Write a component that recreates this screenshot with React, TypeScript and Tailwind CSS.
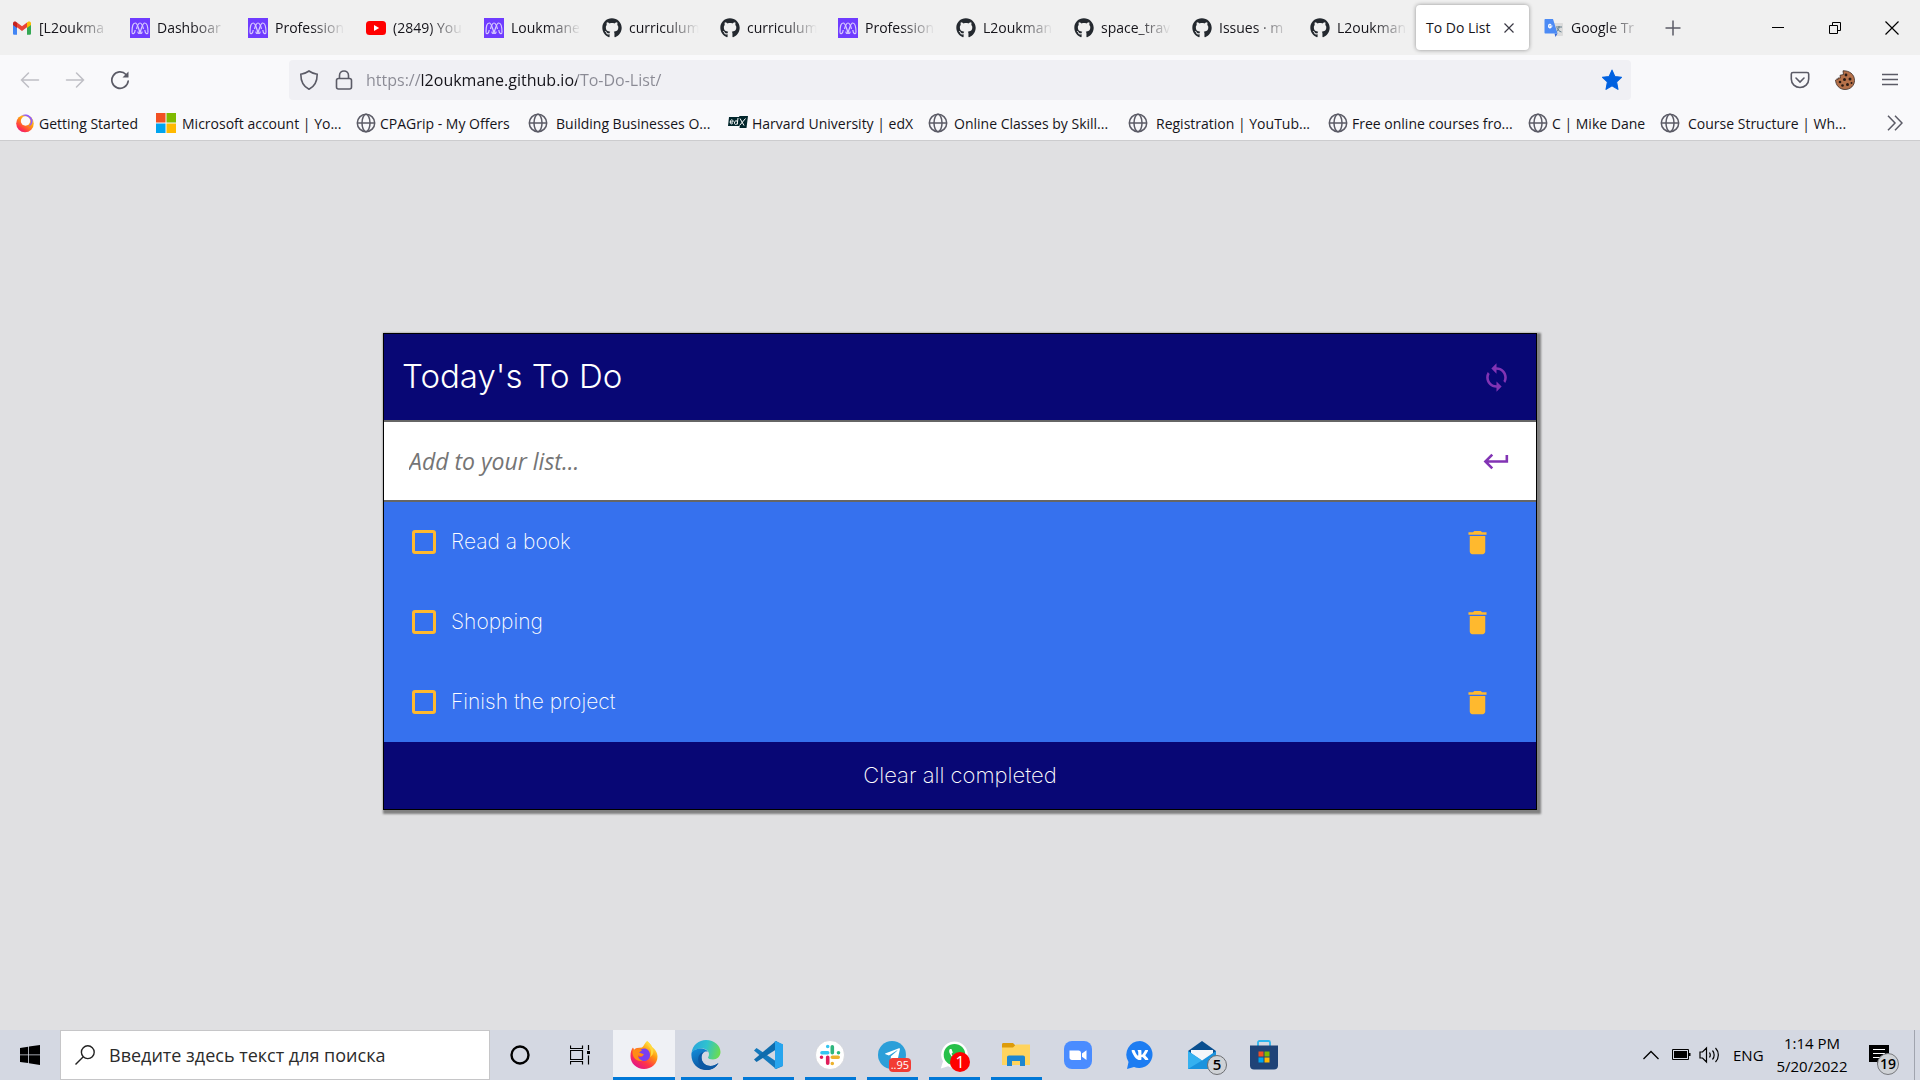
import { useState } from "react";
import type { ReactNode } from "react";
import { FaGithub, FaVk, FaTelegramPlane } from "react-icons/fa";
import { MdDelete, MdKeyboardReturn, MdSync } from "react-icons/md";

/* ---------- Favicons ---------- */

function GmailIcon() {
  return (
    <svg viewBox="0 0 20 20" className="size-5">
      <path d="M1 5v10.500c0 .8.6 1.300 1.300 1.300H5V8.300L1 5.200z" fill="#4285f4" />
      <path d="M19 5v10.500c0 .8-.6 1.300-1.300 1.300H15V8.300l4-3.100z" fill="#34a853" />
      <path d="M5 4.500v4.800l5 3.800 5-3.800V4.500l-5 3.800z" fill="#ea4335" />
      <path d="M1 5.200V7l4 3V4.500l-.8-.6C2.900 3 1 3.800 1 5.200z" fill="#c5221f" />
      <path d="M19 5.200V7l-4 3V4.500l.8-.6c1.300-.9 3.200-.1 3.200 1.300z" fill="#fbbc04" />
    </svg>
  );
}

function MicroverseIcon() {
  return (
    <svg viewBox="0 0 20 20" className="size-5">
      <rect width="20" height="20" fill="#6f3cff" />
      <g fill="none" stroke="#d9ccff" strokeWidth="1.200">
        <path d="M2 14.500C2 8 3 5 5.200 5s2.600 3.500 4.800 9.500c1 1.800 2.200.8 2-1" />
        <path d="M6.500 11C7.500 7 8.300 5 10 5s2.500 2 3.500 6" />
        <path d="M8 13.500c-.2 1.800 1 2.800 2 1C12.200 8.500 12.600 5 14.800 5S18 8 18 14.500" />
        <path d="M2 14.500c.5 2 2.800 1.500 3.200-2.500M18 14.500c-.5 2-2.800 1.500-3.200-2.500" />
      </g>
    </svg>
  );
}

function YoutubeIcon() {
  return (
    <svg viewBox="0 0 20 20" className="size-5">
      <rect y="3" width="20" height="14" rx="3.500" fill="#f00" />
      <path d="M8 7l5.200 3L8 13z" fill="#fff" />
    </svg>
  );
}

function GithubIcon() {
  return <FaGithub className="size-5 text-[#24292f]" />;
}

function TranslateIcon() {
  return (
    <svg viewBox="0 0 20 20" className="size-5">
      <path d="M9 5h9c.6 0 1 .4 1 1v11c0 .6-.4 1-1 1h-6z" fill="#dcdcdc" />
      <path d="M12 9h6M15 8v1c0 2-1 4-3 5M13 10c.8 2 2.500 3.500 4.500 4" stroke="#607d8b" fill="none" />
      <path d="M10.500 15.500h3L11.500 19z" fill="#3367d6" />
      <path d="M1.500 1H9l4.500 14.500h-12c-.6 0-1-.4-1-1V2c0-.6.4-1 1-1z" fill="#4c8bf5" />
      <path d="M8.500 8H6v1.200h1.200c-.3 1-2.700 1.300-2.700-1s2-2.200 2.600-1.300" stroke="#fff" strokeWidth="1.100" fill="none" />
    </svg>
  );
}

function GlobeIcon() {
  return (
    <svg viewBox="0 0 20 20" className="size-5" fill="none" stroke="#5b5b66" strokeWidth="1.500">
      <circle cx="10" cy="10" r="8.700" />
      <ellipse cx="10" cy="10" rx="4" ry="8.700" />
      <path d="M1.500 10h17" />
    </svg>
  );
}

function FirefoxRing() {
  return (
    <svg viewBox="0 0 20 20" className="size-5">
      <defs>
        <linearGradient id="ring" x1="0.900" y1="0" x2="0.200" y2="1">
          <stop offset="0" stopColor="#fff44f" />
          <stop offset="0.450" stopColor="#ff980e" />
          <stop offset="0.800" stopColor="#ff3647" />
          <stop offset="1" stopColor="#e31587" />
        </linearGradient>
      </defs>
      <circle cx="10" cy="10.500" r="8.800" fill="url(#ring)" />
      <circle cx="10.500" cy="8" r="4.700" fill="#f9f9fb" />
      <path d="M6.500 2.500c4-2.500 9.500-.5 11 4.300.5 3-1 6-4 6.600 2.500-2.400 3-5.400 1.500-7.700-2-2.700-5-3.500-8.500-3.200z" fill="#9059ff" />
    </svg>
  );
}

function MicrosoftIcon() {
  return (
    <svg viewBox="0 0 20 20" className="size-5">
      <rect width="9.500" height="9.500" fill="#f25022" />
      <rect x="10.500" width="9.500" height="9.500" fill="#7fba00" />
      <rect y="10.500" width="9.500" height="9.500" fill="#00a4ef" />
      <rect x="10.500" y="10.500" width="9.500" height="9.500" fill="#ffb900" />
    </svg>
  );
}

function EdxIcon() {
  return (
    <svg viewBox="0 0 20 20" className="size-5">
      <path d="M1 4h10l.5-1H20l-1.500 12h-7l.3-2H0z" fill="#02262b" />
      <path d="M2 9h3c.3-3-2.500-3-2.800 0-.2 2 1.300 2.300 2.500 1.500M10 5l-.8 6.500M9.500 9c-.5-2-3-1.500-3 1 0 2 2.300 2 3 0M12 5.500l4 7M17.500 5.500l-6 7" stroke="#fff" fill="none" />
    </svg>
  );
}

/* ---------- Browser chrome ---------- */

type Tab = { title: string; icon?: ReactNode; active?: boolean };

const TABS: Tab[] = [
  { title: "[L2oukma", icon: <GmailIcon /> },
  { title: "Dashboar", icon: <MicroverseIcon /> },
  { title: "Profession", icon: <MicroverseIcon /> },
  { title: "(2849) You", icon: <YoutubeIcon /> },
  { title: "Loukmane", icon: <MicroverseIcon /> },
  { title: "curriculum", icon: <GithubIcon /> },
  { title: "curriculum", icon: <GithubIcon /> },
  { title: "Profession", icon: <MicroverseIcon /> },
  { title: "L2oukman", icon: <GithubIcon /> },
  { title: "space_trav", icon: <GithubIcon /> },
  { title: "Issues · m", icon: <GithubIcon /> },
  { title: "L2oukman", icon: <GithubIcon /> },
  { title: "To Do List", active: true },
  { title: "Google Tr", icon: <TranslateIcon /> },
];

function TabStrip() {
  return (
    <header className="flex h-[55px] items-center bg-[#f0f0f0] text-[14px] text-[#15141a]">
      <div role="tablist" className="flex min-w-0 items-center">
        {TABS.map((tab, i) =>
          tab.active ? (
            <div
              key={i}
              className="mr-[3px] flex h-[45px] w-[113px] shrink-0 items-center justify-between rounded bg-white pr-2 pl-[10px] shadow-[0_0_4px_rgba(0,0,0,0.4)]"
            >
              <button role="tab" aria-selected="true" className="whitespace-nowrap">
                {tab.title}
              </button>
              <button aria-label="Close tab" className="grid size-6 place-items-center">
                <svg viewBox="0 0 10 10" className="size-[10px]" stroke="#3a3944" strokeWidth="1.200">
                  <path d="M.5.5l9 9M9.500.5l-9 9" />
                </svg>
              </button>
            </div>
          ) : (
            <button
              key={i}
              role="tab"
              aria-selected="false"
              className="flex w-[118px] min-w-0 items-center gap-[7px] pr-1 pl-3 text-left"
            >
              <span className="shrink-0">{tab.icon}</span>
              <span className="min-w-0 flex-1 whitespace-nowrap [mask-image:linear-gradient(to_right,black_36px,transparent_70px)]">
                {tab.title}
              </span>
            </button>
          ),
        )}
      </div>
      <button aria-label="New tab" className="ml-[7px] grid size-8 place-items-center">
        <svg viewBox="0 0 16 16" className="size-4" stroke="#5b5b66" strokeWidth="1.500">
          <path d="M8 .5v15M.5 8h15" />
        </svg>
      </button>
      <div className="ml-auto flex">
        <button aria-label="Minimize" className="grid h-[54px] w-[57px] place-items-center">
          <svg viewBox="0 0 12 12" className="size-3" stroke="#000">
            <path d="M0 5.500h12" />
          </svg>
        </button>
        <button aria-label="Restore" className="grid h-[54px] w-[57px] place-items-center">
          <svg viewBox="0 0 12 12" className="size-3" stroke="#000" fill="none">
            <path d="M.5 3.500h8v8h-8zM3.500 3.500v-3h8v8h-3" />
          </svg>
        </button>
        <button aria-label="Close" className="grid h-[54px] w-[57px] place-items-center">
          <svg viewBox="0 0 14 14" className="size-[14px]" stroke="#000" strokeWidth="1.200">
            <path d="M.5.5l13 13M13.500.5l-13 13" />
          </svg>
        </button>
      </div>
    </header>
  );
}

function NavBar() {
  return (
    <nav aria-label="Navigation" className="flex h-[55px] items-center bg-[#f9f9fb] pt-[5px] pb-[10px]">
      <div className="flex w-[289px] shrink-0 pl-[7px]">
        <button aria-label="Back" className="grid h-10 w-[45px] place-items-center">
          <svg viewBox="0 0 20 20" className="size-5" fill="none" stroke="#bfbfc5" strokeWidth="1.500" strokeLinecap="round">
            <path d="M1.500 10H18.500M8.500 3l-7 7 7 7" />
          </svg>
        </button>
        <button aria-label="Forward" className="grid h-10 w-[45px] place-items-center">
          <svg viewBox="0 0 20 20" className="size-5" fill="none" stroke="#bfbfc5" strokeWidth="1.500" strokeLinecap="round">
            <path d="M1.500 10H18.500M11.500 3l7 7-7 7" />
          </svg>
        </button>
        <button aria-label="Reload" className="grid h-10 w-[45px] place-items-center">
          <svg viewBox="0 0 20 20" className="size-5" fill="none" stroke="#5b5b66" strokeWidth="1.700" strokeLinecap="round">
            <path d="M16 4.500a8.200 8.200 0 1 0 2.200 6.500" />
            <path d="M18.500 1.500v6h-6z" fill="#5b5b66" stroke="none" />
          </svg>
        </button>
      </div>
      <div className="flex h-10 min-w-0 flex-1 items-center rounded bg-[#f0f0f4] pr-2 pl-[10px]">
        <svg viewBox="0 0 20 20" className="size-5 shrink-0" fill="none" stroke="#5b5b66" strokeWidth="1.600">
          <path d="M10 1c2.500 1.800 5 2.800 8.200 3.200 0 6.800-2 12-8.200 15C3.800 16.200 1.800 11 1.800 4.200 5 3.800 7.500 2.800 10 1z" />
        </svg>
        <svg viewBox="0 0 20 20" className="ml-[15px] size-5 shrink-0" fill="none" stroke="#5b5b66" strokeWidth="1.600">
          <rect x="2.500" y="8.500" width="15" height="10.500" rx="2" />
          <path d="M5.500 8.500v-3c0-6 9-6 9 0v3" />
        </svg>
        <input
          aria-label="Address"
          defaultValue="https://l2oukmane.github.io/To-Do-List/"
          className="ml-3 min-w-0 flex-1 bg-transparent bg-[linear-gradient(to_right,#8a8a94_55px,#15141a_55px,#15141a_211px,#8a8a94_211px)] bg-clip-text text-[16px] text-transparent outline-none"
        />
        <button aria-label="Edit bookmark">
          <svg viewBox="0 0 20 20" className="size-[22px]" fill="#0061e0" stroke="#0061e0" strokeLinejoin="round">
            <path d="M10 1l2.600 5.800 6 .7-4.400 4.300 1.200 6.700L10 15.300l-5.400 3.200 1.200-6.700L1.400 7.500l6-.7z" />
          </svg>
        </button>
      </div>
      <div className="flex w-[289px] shrink-0 justify-end pr-2">
        <button aria-label="Save to Pocket" className="grid h-10 w-[45px] place-items-center">
          <svg viewBox="0 0 20 20" className="size-5" fill="none" stroke="#5b5b66" strokeWidth="1.600" strokeLinecap="round">
            <path d="M3 2.500h14c1 0 1.700.6 1.700 1.600V9c0 5-4 8.500-8.700 8.500S1.300 14 1.300 9V4.100c0-1 .7-1.600 1.700-1.600z" />
            <path d="M6 8l4 4 4-4" />
          </svg>
        </button>
        <button aria-label="Cookie editor" className="grid h-10 w-[45px] place-items-center">
          <svg viewBox="0 0 20 20" className="size-5">
            <path d="M8 .8C14 .5 19.500 4 19.500 10.500c0 5-4 9-9.500 9S.6 15 .6 10l1-.8 1.300.5V8h2.600L5 5.300l3.500-.8z" fill="#b5714a" stroke="#3b2a22" strokeWidth=".8" />
            <g fill="#2a1a14">
              <circle cx="11" cy="5" r="1.400" />
              <circle cx="15" cy="9" r="1.500" />
              <circle cx="9.500" cy="9.500" r="1.500" />
              <circle cx="5" cy="12" r="1.300" />
              <circle cx="7.500" cy="15.500" r="1.300" />
              <circle cx="12.500" cy="14.500" r="1.500" />
              <circle cx="16.500" cy="13" r="1" />
            </g>
          </svg>
        </button>
        <button aria-label="Open menu" className="grid h-10 w-[45px] place-items-center">
          <svg viewBox="0 0 16 14" className="h-[14px] w-4" stroke="#5b5b66" strokeWidth="1.500">
            <path d="M0 1.500h16M0 6.500h16M0 11.500h16" />
          </svg>
        </button>
      </div>
    </nav>
  );
}

const BOOKMARKS: { label: string; icon: ReactNode; width: string }[] = [
  { label: "Getting Started", icon: <FirefoxRing />, width: "w-[141px] gap-1" },
  { label: "Microsoft account | Yo...", icon: <MicrosoftIcon />, width: "w-[200px] gap-[6px]" },
  { label: "CPAGrip - My Offers", icon: <GlobeIcon />, width: "w-[172px] gap-1" },
  { label: "Building Businesses O...", icon: <GlobeIcon />, width: "w-[200px] gap-2" },
  { label: "Harvard University | edX", icon: <EdxIcon />, width: "w-[200px] gap-1" },
  { label: "Online Classes by Skill...", icon: <GlobeIcon />, width: "w-[200px] gap-[6px]" },
  { label: "Registration | YouTub...", icon: <GlobeIcon />, width: "w-[200px] gap-2" },
  { label: "Free online courses fro...", icon: <GlobeIcon />, width: "w-[200px] gap-1" },
  { label: "C | Mike Dane", icon: <GlobeIcon />, width: "w-[132px] gap-1" },
  { label: "Course Structure | Wh...", icon: <GlobeIcon />, width: "w-[200px] gap-2" },
];

function BookmarksBar() {
  return (
    <div className="flex h-[31px] items-center border-b border-[#ccccce] bg-[#f9f9fb] pb-1 pl-[15px] text-[14px] text-[#15141a]">
      {BOOKMARKS.map((b) => (
        <a key={b.label} href="#" className={`flex min-w-0 items-center whitespace-nowrap ${b.width}`}>
          <span className="shrink-0">{b.icon}</span>
          {b.label}
        </a>
      ))}
      <button aria-label="More bookmarks" className="mr-[17px] ml-auto">
        <svg viewBox="0 0 16 16" className="size-4" fill="none" stroke="#5b5b66" strokeWidth="1.500">
          <path d="M1 .8L8 8l-7 7.200M8 .8L15 8l-7 7.200" />
        </svg>
      </button>
    </div>
  );
}

/* ---------- To-do card ---------- */

function TodoItem({ label }: { label: string }) {
  const [done, setDone] = useState(false);
  return (
    <li className="flex h-20 items-center pr-[43px] pl-7">
      <label className="flex items-center gap-[15px] text-[21px] font-extralight text-white">
        <input
          type="checkbox"
          checked={done}
          onChange={(e) => setDone(e.target.checked)}
          className="size-6 appearance-none rounded-[3px] border-[3px] border-[#ffb92e] checked:bg-[#ffb92e]"
        />
        {label}
      </label>
      <button aria-label={`Delete ${label}`} className="ml-auto text-[#ffb92e]">
        <MdDelete className="size-[31px]" />
      </button>
    </li>
  );
}

function TodoCard() {
  return (
    <section className="mt-48 box-content w-3/5 border border-black bg-[#080775] font-['Inter',sans-serif] shadow-[2px_2px_2px_2px_#808080]">
      <div className="flex h-[86px] items-center justify-between pr-6 pl-[18px]">
        <h1 className="text-[33px] font-light text-white">Today's To Do</h1>
        <button aria-label="Refresh list" className="text-[#8234b4]">
          <MdSync className="size-[31px]" />
        </button>
      </div>
      <form
        onSubmit={(e) => e.preventDefault()}
        className="flex h-[82px] items-center border-y-2 border-[#666] bg-white pr-6 pl-[25px]"
      >
        <input
          aria-label="New task"
          placeholder="Add to your list..."
          className="min-w-0 flex-1 font-['Open_Sans',sans-serif] text-[23px] italic outline-none placeholder:text-[#757575]"
        />
        <button aria-label="Add task" className="text-[#8234b4]">
          <MdKeyboardReturn className="size-[31px]" />
        </button>
      </form>
      <ul className="bg-[#3671ee]">
        <TodoItem label="Read a book" />
        <TodoItem label="Shopping" />
        <TodoItem label="Finish the project" />
      </ul>
      <button className="block h-[67px] w-full text-[22px] font-extralight text-white">Clear all completed</button>
    </section>
  );
}

/* ---------- Taskbar ---------- */

function FirefoxLogo() {
  return (
    <svg viewBox="0 0 30 30" className="size-[30px]">
      <defs>
        <linearGradient id="ff" x1="0.850" y1="0.100" x2="0.250" y2="0.950">
          <stop offset="0" stopColor="#fff44f" />
          <stop offset="0.350" stopColor="#ff980e" />
          <stop offset="0.700" stopColor="#ff3647" />
          <stop offset="1" stopColor="#e31587" />
        </linearGradient>
      </defs>
      <path d="M18 1c2 1.500 4 3.500 5 6 3 2 5.500 5.500 5.500 9.500C28.500 24 22.500 29 15 29S1.500 23.500 1.500 16c0-4 1-6.500 2.500-8.500L5 10c1-1.300 2-2 3-2l5-.5C15 6 15.500 3 18 1z" fill="url(#ff)" />
      <path d="M12 9.500c4-2.500 9 0 9 5.500 0 4-3 6-6.500 6-3 0-5.500-2-5.500-4.500 2 1 4.500.5 5-1-1.500-1-3-1-4.500-.5.500-2 1-3.500 2.500-5.500z" fill="#7a3ff0" />
      <path d="M4 8l1 2c3-2 6-1 8 .5-1.500.5-2 1.500-3 2.500 2 0 3.500.5 5 1.500-2 2.500-5 1-6 1 0 3 3 5 5.500 5-6 2-11.500-2.500-11-9z" fill="#ff8b16" />
      <path d="M18 1c0 4 4 6 4 11 0 2 0 3-1 5 5-3 3.500-8 2-10-1-2.500-3-4.500-5-6z" fill="#ffd83d" />
    </svg>
  );
}

function EdgeLogo() {
  return (
    <svg viewBox="0 0 30 30" className="size-[30px]">
      <defs>
        <linearGradient id="edgeTop" x1="0" y1="0.300" x2="1" y2="0.500">
          <stop offset="0" stopColor="#2aa5dd" />
          <stop offset="0.500" stopColor="#2fc2cf" />
          <stop offset="1" stopColor="#6bdc50" />
        </linearGradient>
        <linearGradient id="edgeLow" x1="0" y1="0" x2="0.600" y2="1">
          <stop offset="0" stopColor="#1390dd" />
          <stop offset="1" stopColor="#0b4a94" />
        </linearGradient>
      </defs>
      <path d="M.5 13C1.500 5 8 0 15 0c8.500 0 14.500 6 14.500 12 0 4.500-3.500 7.500-7.500 7.500-3 0-5-1-5-2 0-.6 1-1 1-3.500 0-3-3-5.500-7-5.500C6 8.500 2 10.500.5 13z" fill="url(#edgeTop)" />
      <path d="M.5 13C2 10 6 8.500 10 8.500c3 0 6 1.500 7 3.500-3-1.500-6.500 1-6.500 5.500 0 5 4.500 8.500 9 8.500 3.500 0 6-1.500 8-3-2.500 4.500-7 7-12 7C6 30-.5 22.500.5 13z" fill="url(#edgeLow)" />
      <path d="M10.500 17.500c0-2.500 1-4.500 2.500-5.500-5 1-6.500 5.500-5.500 9.500 1 5 5 8.500 8 8.500 5 0 9.500-2.500 12-7-2 1.500-4.500 3-8 3-4.500 0-9-3.500-9-8.500z" fill="#0c59a4" />
    </svg>
  );
}

function VsCodeLogo() {
  return (
    <svg viewBox="0 0 30 30" className="size-[30px]">
      <path d="M1 10.500L3.500 8 30 26l-7 3z" fill="#1479bd" />
      <path d="M1 19.500L3.500 22 30 5l-7-4z" fill="#0f6cad" />
      <path d="M22 1l8 3.200v21.600L22 29c-.5 0-.3-.5 0-1V2c-.3-.5-.5-1 0-1z" fill="#27a5ee" />
    </svg>
  );
}

function SlackLogo() {
  return (
    <svg viewBox="0 0 30 30" className="size-[30px]">
      <circle cx="15" cy="15" r="14.500" fill="#fff" stroke="#c9cbd1" strokeWidth=".6" />
      <g strokeWidth="3.600" strokeLinecap="round">
        <path d="M7 12.700h5.700M12.700 6.500h0" stroke="#36c5f0" />
        <path d="M17.300 6.800v5.900M23.500 12.700h0" stroke="#2eb67d" />
        <path d="M17.300 17.300h5.900M17.300 23.500h0" stroke="#ecb22e" />
        <path d="M12.700 17.300v5.900M6.500 17.300h0" stroke="#e01e5a" />
      </g>
    </svg>
  );
}

function TelegramLogo() {
  return (
    <span className="relative grid size-[28px] place-items-center rounded-full bg-[#2c9fd9]">
      <FaTelegramPlane className="size-[17px] text-white" />
      <span className="absolute -right-[5px] -bottom-[3px] rounded bg-[#f23c34] px-[2px] text-[11px] leading-[14px] text-white">
        ..95
      </span>
    </span>
  );
}

function WhatsappLogo() {
  return (
    <span className="relative grid size-[28px] place-items-center">
      <svg viewBox="0 0 28 28" className="size-[28px]">
        <path d="M14.500.5a13 13 0 0 1 0 26.500c-2.400 0-4.500-.6-6.300-1.700L.8 27.500 3 20.300A13.200 13.200 0 0 1 14.500.5z" fill="#fff" />
        <circle cx="14.500" cy="13.700" r="10.800" fill="#27c04a" />
        <path d="M10 8c-2 2 0 6 3 8.500 3 2.500 6 3 7 1l-3-2-1.500 1.500c-2-1-3.500-2.500-4-4.300l1.300-1.200L11.500 8z" fill="#fff" />
      </svg>
      <span className="absolute -right-[2px] -bottom-[3px] grid size-5 place-items-center rounded-full bg-[#f00] text-[16px] leading-none text-white">
        1
      </span>
    </span>
  );
}

function ExplorerLogo() {
  return (
    <svg viewBox="0 0 30 30" className="size-[30px]">
      <path d="M1 4.500c0-1 .6-1.500 1.500-1.500H12l3 3v5H1z" fill="#dd9b0a" />
      <path d="M1 7.500h11L15 4.500h14V25H1z" fill="#ffd45e" />
      <path d="M6 26V17.500c0-1.300.7-2 2-2h14c1.300 0 2 .7 2 2V26h-5v-5h-8v5z" fill="#1c86d1" />
    </svg>
  );
}

function ZoomLogo() {
  return (
    <svg viewBox="0 0 28 28" className="size-[28px]">
      <rect width="28" height="28" rx="8" fill="#4a8cff" />
      <path d="M5.500 9.500h9c1.500 0 2.500 1 2.500 2.500v7H8c-1.500 0-2.500-1-2.500-2.500zM18 12.500l4.500-3.300v9.700L18 15.700z" fill="#fff" />
    </svg>
  );
}

function VkLogo() {
  return (
    <span className="relative grid size-[28px] place-items-center">
      <svg viewBox="0 0 28 28" className="size-[28px]">
        <path d="M14 0a13.500 13.500 0 1 1-6 26L1 28l1.500-7A13.700 13.700 0 0 1 14 0z" fill="#1d7df2" />
      </svg>
      <FaVk className="absolute size-[18px] text-white" />
    </span>
  );
}

function MailLogo() {
  return (
    <span className="relative grid size-[30px] place-items-center">
      <svg viewBox="0 0 30 30" className="size-[30px]">
        <path d="M1 11L15 1l14 10v4H1z" fill="#0a4f8f" />
        <path d="M4 10h22v5l-11 7-11-7z" fill="#f4f6fa" />
        <path d="M1 11v18h28V11L15 20.500z" fill="#1a93de" />
        <path d="M1 29l14-8.500L1 11z" fill="#35b1f0" />
      </svg>
      <span className="absolute -right-[10px] -bottom-[5px] grid size-5 place-items-center rounded-full border border-[#6d6f73] bg-[#cfd2d6] text-[15px] leading-none font-semibold text-black">
        5
      </span>
    </span>
  );
}

function StoreLogo() {
  return (
    <svg viewBox="0 0 30 30" className="size-[30px]">
      <path d="M9 6V2.500c0-1 .7-1.500 1.500-1.500h9c.8 0 1.500.5 1.500 1.500V6" fill="none" stroke="#2db5ee" strokeWidth="1.800" />
      <path d="M1 5.500h28v20c0 2.500-1.500 4-4 4H5c-2.500 0-4-1.500-4-4z" fill="#1f4377" />
      <path d="M9.500 11.500h5v5h-5z" fill="#f25022" />
      <path d="M15.500 11.500h5v5h-5z" fill="#7fba00" />
      <path d="M9.500 17.500h5v5h-5z" fill="#00a4ef" />
      <path d="M15.500 17.500h5v5h-5z" fill="#ffb900" />
    </svg>
  );
}

const APPS: { name: string; icon: ReactNode; state?: "active" | "running" }[] = [
  { name: "Firefox", icon: <FirefoxLogo />, state: "active" },
  { name: "Edge", icon: <EdgeLogo />, state: "running" },
  { name: "Visual Studio Code", icon: <VsCodeLogo />, state: "running" },
  { name: "Slack", icon: <SlackLogo />, state: "running" },
  { name: "Telegram", icon: <TelegramLogo />, state: "running" },
  { name: "WhatsApp", icon: <WhatsappLogo />, state: "running" },
  { name: "File Explorer", icon: <ExplorerLogo />, state: "running" },
  { name: "Zoom", icon: <ZoomLogo /> },
  { name: "VK", icon: <VkLogo /> },
  { name: "Mail", icon: <MailLogo /> },
  { name: "Microsoft Store", icon: <StoreLogo /> },
];

function Taskbar() {
  return (
    <footer className="flex h-[50px] shrink-0 items-stretch bg-[#d4d8e2] text-black">
      <button aria-label="Start" className="grid w-[60px] place-items-center">
        <svg viewBox="0 0 20 20" className="size-5">
          <path d="M0 3l8.200-1.200v7.700H0zM9 1.600L20 0v9.500H9zM0 10.300h8.200V18L0 16.900zM9 10.300h11V20L9 18.300z" />
        </svg>
      </button>
      <label className="flex w-[430px] items-center border border-[#c6c6c8] bg-white pl-[14px]">
        <svg viewBox="0 0 20 20" className="size-5 shrink-0" fill="none" stroke="#222" strokeWidth="1.400">
          <circle cx="12.800" cy="7.200" r="6.400" />
          <path d="M8.300 11.700L.5 19.500" />
        </svg>
        <input
          aria-label="Search"
          placeholder="Введите здесь текст для поиска"
          className="ml-[14px] min-w-0 flex-1 text-[18px] outline-none placeholder:text-[#2b2b2b]"
        />
      </label>
      <button aria-label="Cortana" className="grid w-[60px] place-items-center">
        <svg viewBox="0 0 20 20" className="size-5" fill="none" stroke="#000" strokeWidth="2.400">
          <circle cx="10" cy="10" r="8.500" />
        </svg>
      </button>
      <button aria-label="Task view" className="mr-[3px] grid w-[60px] place-items-center">
        <svg viewBox="0 0 20 20" className="size-5" fill="none" stroke="#000" strokeWidth="1.200">
          <path d="M.5.500v3h12v-3M.5 19.500v-3h12v3M.5 5.500h12v9H.5zM18.500 0v5M18.500 10.500v9" />
          <path d="M17 6h3v3h-3z" fill="#000" stroke="none" />
        </svg>
      </button>
      <div className="flex">
        {APPS.map((app) => (
          <button
            key={app.name}
            aria-label={app.name}
            className={`flex w-[62px] flex-col items-center ${app.state === "active" ? "bg-[#eff1f5]" : ""}`}
          >
            <span className="grid flex-1 place-items-center pt-[2px]">{app.icon}</span>
            <span
              className={
                app.state === "active"
                  ? "h-[3px] w-full bg-[#0078d7]"
                  : app.state === "running"
                    ? "h-[3px] w-[51px] bg-[#0078d7]"
                    : "h-[3px]"
              }
            />
          </button>
        ))}
      </div>
      <div className="ml-auto flex items-center text-[15px]">
        <button aria-label="Show hidden icons">
          <svg viewBox="0 0 16 16" className="size-4" fill="none" stroke="#000" strokeWidth="1.300">
            <path d="M.5 12L8 4.500l7.500 7.500" />
          </svg>
        </button>
        <svg viewBox="0 0 20 14" className="ml-3 h-[14px] w-5" role="img" aria-label="Battery">
          <path d="M1.500 1.500h16v10h-16z" fill="none" stroke="#000" />
          <path d="M3 3h13v7H3zM18 5h1.500v3H18z" />
        </svg>
        <svg viewBox="0 0 22 18" className="ml-2 h-[18px] w-[22px]" fill="none" stroke="#000" strokeWidth="1.200" role="img" aria-label="Volume">
          <path d="M1 6v6h2.500l4 4V2l-4 4zM10.500 6.500c1 1.500 1 3.500 0 5M13.500 4.500c2.200 2.500 2.200 6.500 0 9M16.500 2c3.800 4 3.800 10 0 14" />
        </svg>
        <button className="ml-3 w-8 text-left">ENG</button>
        <time className="w-[94px] text-center leading-[23px]">
          1:14 PM
          <br />
          5/20/2022
        </time>
        <button aria-label="Notifications" className="relative ml-[10px] h-5 w-5">
          <svg viewBox="0 0 20 20" className="size-5">
            <path d="M0 0h20v17h-8l-4 3v-3H0z" />
            <path d="M4 4.500h12M4 8.500h12M4 12.500h8" stroke="#fff" strokeWidth="1.200" />
          </svg>
          <span className="absolute top-2 left-2 grid size-[22px] place-items-center rounded-full border border-[#77797d] bg-[#cfd2d6] text-[14px] leading-none font-semibold">
            19
          </span>
        </button>
        <span className="mr-[5px] ml-[25px] h-[50px] w-px bg-[#a0a4ae]" />
      </div>
    </footer>
  );
}

export default function App() {
  return (
    <div className="flex min-h-screen flex-col bg-[#e0e0e2] font-['Open_Sans',sans-serif]">
      <TabStrip />
      <NavBar />
      <BookmarksBar />
      <main className="flex flex-1 flex-col items-center">
        <TodoCard />
      </main>
      <Taskbar />
    </div>
  );
}
